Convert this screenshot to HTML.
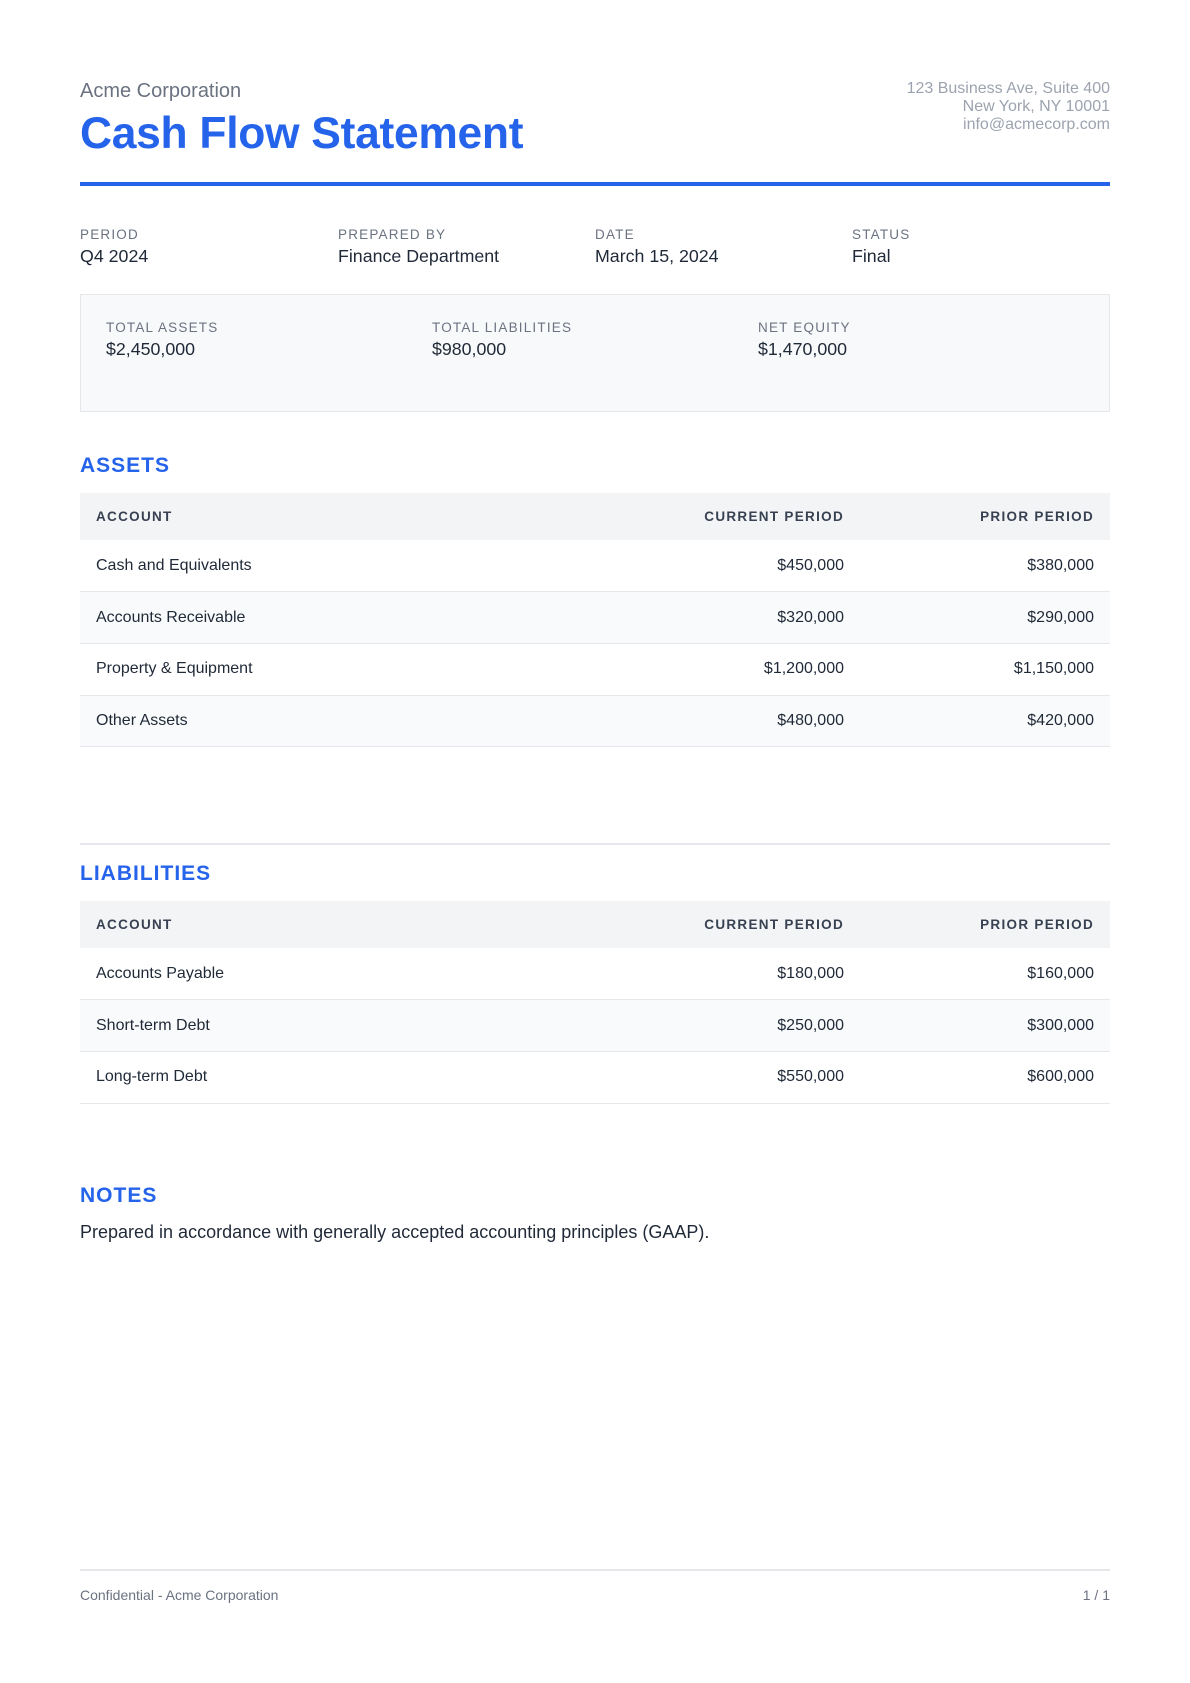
<!DOCTYPE html>
<html><head><meta charset="utf-8"><style>
*{margin:0;padding:0;box-sizing:border-box}
body{width:1190px;height:1683px;background:#fff;font-family:"Liberation Sans",sans-serif;position:relative;color:#1f2937}
.a{position:absolute}
.lbl{font-size:13.5px;letter-spacing:1.2px;color:#6b7280}
.val{font-size:17.8px;color:#1f2937}
h2{position:absolute;left:80px;font-size:21px;font-weight:bold;color:#2563eb;letter-spacing:1px}
table{position:absolute;left:80px;width:1030px;border-collapse:collapse;font-size:16px;color:#1f2937}
th{background:#f3f4f6;height:47px;font-size:13.5px;font-weight:bold;letter-spacing:1.3px;color:#374151;text-align:left;padding:0 16px}
td{height:51.7px;border-bottom:1.5px solid #e5e7eb;padding:0 16px}
tr:nth-child(odd) td{background:#f9fafb}
.r{text-align:right}
</style></head><body>
<div class="a" style="left:80px;top:80px;font-size:20px;color:#6b7280">Acme Corporation</div>
<div class="a" style="left:80px;top:109px;font-size:44.4px;font-weight:bold;color:#2563eb;letter-spacing:-0.3px">Cash Flow Statement</div>
<div class="a" style="right:80px;top:80px;font-size:16px;line-height:17.8px;color:#9ca3af;text-align:right">123 Business Ave, Suite 400<br>New York, NY 10001<br>info@acmecorp.com</div>
<div class="a" style="left:80px;top:182px;width:1030px;height:4px;background:#2563eb"></div>

<div class="a lbl" style="left:80px;top:227px">PERIOD</div><div class="a val" style="left:80px;top:246px">Q4 2024</div>
<div class="a lbl" style="left:338px;top:227px">PREPARED BY</div><div class="a val" style="left:338px;top:246px">Finance Department</div>
<div class="a lbl" style="left:595px;top:227px">DATE</div><div class="a val" style="left:595px;top:246px">March 15, 2024</div>
<div class="a lbl" style="left:852px;top:227px">STATUS</div><div class="a val" style="left:852px;top:246px">Final</div>

<div class="a" style="left:80px;top:294px;width:1030px;height:118px;background:#f8f9fb;border:1.5px solid #e5e7eb"></div>
<div class="a lbl" style="left:106px;top:320px">TOTAL ASSETS</div><div class="a val" style="left:106px;top:339px">$2,450,000</div>
<div class="a lbl" style="left:432px;top:320px">TOTAL LIABILITIES</div><div class="a val" style="left:432px;top:339px">$980,000</div>
<div class="a lbl" style="left:758px;top:320px">NET EQUITY</div><div class="a val" style="left:758px;top:339px">$1,470,000</div>

<h2 style="top:454px">ASSETS</h2>
<table style="top:493px">
<tr><th>ACCOUNT</th><th class="r">CURRENT PERIOD</th><th class="r" style="width:250px">PRIOR PERIOD</th></tr>
<tr><td>Cash and Equivalents</td><td class="r">$450,000</td><td class="r">$380,000</td></tr>
<tr><td>Accounts Receivable</td><td class="r">$320,000</td><td class="r">$290,000</td></tr>
<tr><td>Property &amp; Equipment</td><td class="r">$1,200,000</td><td class="r">$1,150,000</td></tr>
<tr><td>Other Assets</td><td class="r">$480,000</td><td class="r">$420,000</td></tr>
</table>

<div class="a" style="left:80px;top:843px;width:1030px;height:1.5px;background:#e5e7eb"></div>
<h2 style="top:862px">LIABILITIES</h2>
<table style="top:901px">
<tr><th>ACCOUNT</th><th class="r">CURRENT PERIOD</th><th class="r" style="width:250px">PRIOR PERIOD</th></tr>
<tr><td>Accounts Payable</td><td class="r">$180,000</td><td class="r">$160,000</td></tr>
<tr><td>Short-term Debt</td><td class="r">$250,000</td><td class="r">$300,000</td></tr>
<tr><td>Long-term Debt</td><td class="r">$550,000</td><td class="r">$600,000</td></tr>
</table>

<h2 style="top:1184px">NOTES</h2>
<div class="a" style="left:80px;top:1222px;font-size:18px;color:#1f2937">Prepared in accordance with generally accepted accounting principles (GAAP).</div>

<div class="a" style="left:80px;top:1569px;width:1030px;height:1.5px;background:#e5e7eb"></div>
<div class="a" style="left:80px;top:1587px;font-size:14px;color:#6b7280">Confidential - Acme Corporation</div>
<div class="a" style="right:80px;top:1587px;font-size:14px;color:#6b7280">1 / 1</div>
</body></html>
